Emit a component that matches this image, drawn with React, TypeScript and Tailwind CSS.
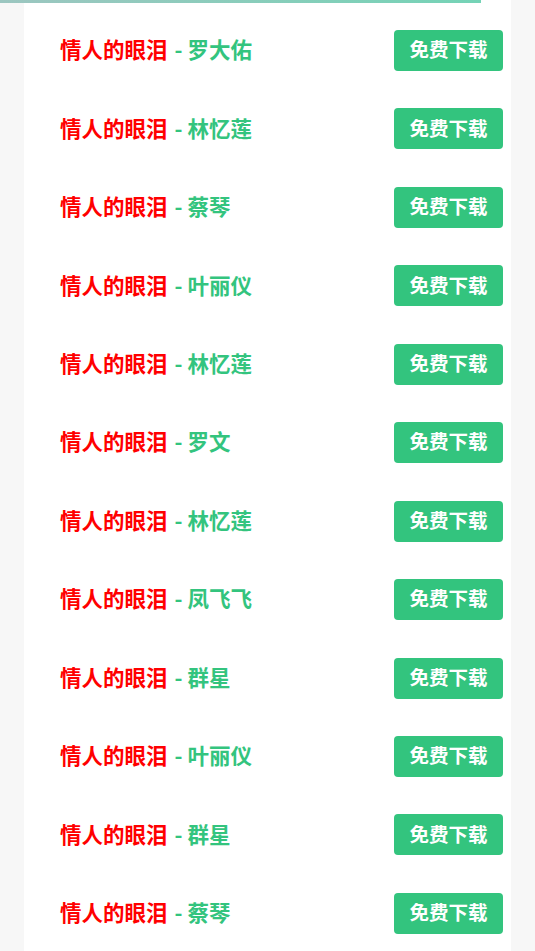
import React from "react";

const items = [
  "罗大佑",
  "林忆莲",
  "蔡琴",
  "叶丽仪",
  "林忆莲",
  "罗文",
  "林忆莲",
  "凤飞飞",
  "群星",
  "叶丽仪",
  "群星",
  "蔡琴",
];

export default function App() {
  return (
    <div
      className="relative min-h-[951px] w-[535px] overflow-hidden bg-[#f7f7f7]"
      style={{ fontFamily: '"Noto Sans CJK SC", "Noto Sans", sans-serif' }}
    >
      <div className="absolute left-0 top-0 h-[3px] w-[481px] bg-gradient-to-r from-[#9cc6c0] to-[#74d3b6]" />
      <div className="ml-[24px] w-[487px] bg-white pt-[11.3px] min-h-[951px]">
        {items.map((name, i) => (
          <div key={i} className="flex h-[78.45px] items-center justify-between pl-[36px] pr-[8px]">
            <div className="flex items-center pb-[3px] text-[21.5px] font-bold leading-none">
              <span className="text-[#ff0000]">情人的眼泪</span>
              <span className="ml-[7px] mr-[5px] text-[#33c47e]">-</span>
              <span className="text-[#33c47e]">{name}</span>
            </div>
            <div className="flex h-[41px] w-[109px] items-center justify-center rounded-[4px] bg-[#33c47e] pb-[3px] text-[19.5px] font-bold leading-none text-white">
              免费下载
            </div>
          </div>
        ))}
      </div>
    </div>
  );
}
